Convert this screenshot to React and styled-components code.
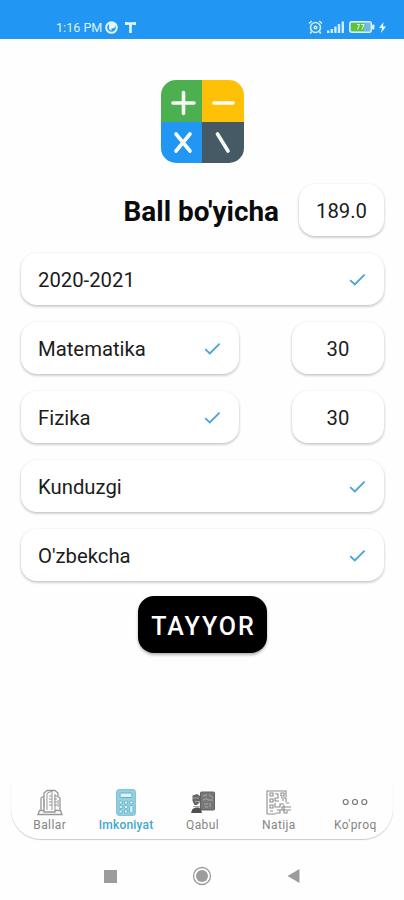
import React from 'react'
import styled, {createGlobalStyle} from 'styled-components'

const GlobalStyle = createGlobalStyle`
    * { box-sizing: border-box; }
    body {
        margin: 0;
        background: #fefefe;
        font-family: Roboto, "Liberation Sans", sans-serif;
        color: #1c1c1c;
    }
`;

const Screen = styled.div`
    display: flex;
    flex-direction: column;
    width: 404px;
    height: 900px;
    overflow: hidden;
`;

const StatusBar = styled.header`
    display: flex;
    flex-shrink: 0;
    align-items: center;
    justify-content: space-between;
    height: 39px;
    padding: 15px 18px 0 56px;
    background: #2196f3;
    color: #d9f2fb;
    font-size: 12.6px;
    font-weight: 400;
`;

const StatusGroup = styled.div`
    display: flex;
    align-items: center;
    gap: ${props => props.$gap}px;
`;

const Main = styled.main`
    display: flex;
    flex-direction: column;
    align-items: center;
    flex: 1;
    padding: 41px 20px 0 21px;
`;

const Form = styled.div`
    display: flex;
    flex-direction: column;
    gap: 17px;
    width: 100%;
    margin-top: 21px;
`;

const Row = styled.div`
    display: flex;
    align-items: center;
    justify-content: ${props => props.$end ? 'flex-end' : 'space-between'};
`;

const Title = styled.h1`
    margin: 0 20px 0 0;
    padding-top: 3px;
    color: #0b0b0b;
    font-size: 27.9px;
    font-weight: 700;
    line-height: 49px;
    white-space: nowrap;
`;

const Card = styled.div`
    display: flex;
    align-items: center;
    justify-content: space-between;
    width: ${props => props.$width || '100%'};
    height: 52px;
    padding: 2px 18px 0 17px;
    border-radius: 16px;
    background: white;
    box-shadow: 0 1px 3px rgba(0, 0, 0, 0.2), 0 2px 3px rgba(0, 0, 0, 0.08);
    font-size: 20.3px;
    white-space: nowrap;
`;

const ScoreCard = styled(Card)`
    justify-content: center;
    padding: 2px 0 0;
`;

const Submit = styled.button`
    width: 129px;
    height: 57px;
    margin-top: 15px;
    padding: 3px 0 0 2px;
    border: none;
    border-radius: 16px;
    background: black;
    box-shadow: 0 2px 3px rgba(0, 0, 0, 0.3);
    color: white;
    font-family: inherit;
    font-size: 25px;
    font-weight: 500;
    letter-spacing: 2px;
`;

const TabBar = styled.nav`
    display: flex;
    flex-shrink: 0;
    height: 56px;
    margin: 0 11px 0 11px;
    border-radius: 0 0 30px 30px;
    background: #fefefe;
    box-shadow: 0 1px 1px rgba(0, 0, 0, 0.2);
`;

const Tab = styled.div`
    display: flex;
    flex: 1;
    flex-direction: column;
    align-items: center;
    gap: 2px;
    padding: 6px 0 0 1px;
    color: ${props => props.$active ? '#45a6cb' : '#858585'};
    font-size: 12px;
    font-weight: ${props => props.$active ? 500 : 400};
    letter-spacing: ${props => props.$active ? 0.2 : 0.4}px;
    line-height: 14px;
    white-space: nowrap;
`;

const SystemNav = styled.footer`
    display: flex;
    flex-shrink: 0;
    align-items: center;
    justify-content: space-between;
    height: 61px;
    padding: 13px 104px 0 104px;
`;

const Check = () => (
    <svg width="17" height="14" viewBox="0 0 17 14" fill="none" stroke="#4ba6cf" strokeWidth="1.8">
        <path d="M1.2 7.2L5.8 11.5L15.6 1.6" />
    </svg>
)

const Logo = () => (
    <svg width="83" height="83" viewBox="0 0 83 83">
        <clipPath id="logo"><rect width="83" height="83" rx="15" /></clipPath>
        <g clipPath="url(#logo)">
            <rect width="42" height="42" fill="#4caf50" />
            <rect x="41" width="42" height="42" fill="#ffc107" />
            <rect y="42" width="42" height="41" fill="#2196f3" />
            <rect x="41" y="42" width="42" height="41" fill="#455a64" />
        </g>
        <g stroke="#f8fbf4" strokeWidth="3.6" strokeLinecap="round">
            <path d="M12 23H33M22.5 12.5V33.5M53 23H72" />
            <path d="M15 54L29 71M29 54L15 71M56.500 54L67 71" />
        </g>
    </svg>
)

const ClockBadge = () => (
    <svg width="13" height="13" viewBox="0 0 13 13">
        <circle cx="6.500" cy="6.500" r="5.300" fill="none" stroke="#e2f6fd" strokeWidth="2" />
        <path d="M4 2H7.500A2.500 2.500 0 0 1 7.500 7.500H6.500V10L4 8Z" fill="#e2f6fd" />
    </svg>
)

const Telegraph = () => (
    <svg width="11" height="11" viewBox="0 0 11 11">
        <path d="M1 0V3M10 0V3M1 1.500H10M5.500 1V11" stroke="#e2f6fd" strokeWidth="2.700" fill="none" />
    </svg>
)

const Alarm = () => (
    <svg width="15" height="14" viewBox="0 0 15 14" fill="none" stroke="#cdeef8" strokeWidth="1.600">
        <circle cx="7.500" cy="7.500" r="5" />
        <circle cx="7.500" cy="7.500" r="1.300" />
        <path d="M1 3.500L3.800 1M14 3.500L11.200 1M3.500 11.500L2.300 13.500M11.500 11.500L12.700 13.500" />
    </svg>
)

const Signal = () => (
    <svg width="18" height="12" viewBox="0 0 18 12" stroke="#cdeef8" strokeWidth="2.400">
        <path d="M1.200 9.500V12M4.800 8V12M8.400 5.500V12M12 3V12" />
        <path d="M15.800 0.500V12" />
    </svg>
)

const Battery = () => (
    <svg width="26" height="12" viewBox="0 0 26 12">
        <rect x="0.800" y="0.800" width="21.500" height="10.400" rx="2" fill="#6fb8ea" stroke="#d5f2ec" strokeWidth="1.500" />
        <rect x="2" y="2" width="13" height="8" fill="#5dc436" />
        <path d="M8 3.500H10.500L8.500 8.500M12 3.500H15L13 8.500" stroke="#e3fadc" fill="none" />
        <rect x="23" y="3.500" width="2.500" height="5" rx="1" fill="#d5f2ec" />
    </svg>
)

const Bolt = () => (
    <svg width="7" height="11" viewBox="0 0 7 11">
        <path d="M4.500 0L0 6H3L2 11L7 4.500H4Z" fill="#e8faff" />
    </svg>
)

const Buildings = () => (
    <svg width="26" height="27" viewBox="0 0 26 27" fill="none" stroke="#989898">
        <path d="M7 21V4L10 1.500H18L21 4V7M4 21V9L7 7M20 7L23 9V21" strokeWidth="1.300" />
        <path d="M10 21V4.500L15 2V21M18 5V21" />
        <path d="M12 7H15M12 10H15M12 13H15M12 16H15M17 7H20M17 10H20M17 13H20M17 16H20M7 10V18M21 11V18" />
        <path d="M2.500 21.500H7V23H18V21.500H23.500L25 25.500H1Z" strokeWidth="1.400" />
    </svg>
)

const Calculator = () => (
    <svg width="20" height="27" viewBox="0 0 20 27">
        <rect x="0.700" y="0.700" width="18.600" height="25.600" rx="2" fill="#9ad1e0" stroke="#6dbcd4" />
        <rect x="4" y="4" width="12" height="4.500" rx="0.500" fill="#e2f3f6" stroke="#5db1cb" />
        <g fill="#dceff4" stroke="#5db1cb" strokeWidth="0.900">
            <rect x="3" y="12" width="3.400" height="3" rx="1" />
            <rect x="8.300" y="12" width="3.400" height="3" rx="1" />
            <rect x="13.600" y="12" width="3.400" height="3" rx="1" />
            <rect x="3" y="16.500" width="3.400" height="3" rx="1" />
            <rect x="8.300" y="16.500" width="3.400" height="3" rx="1" />
            <rect x="3" y="21" width="3.400" height="3" rx="1" />
            <rect x="8.300" y="21" width="3.400" height="3" rx="1" />
            <rect x="13.600" y="16.500" width="3.400" height="7.500" rx="1" />
        </g>
    </svg>
)

const Teacher = () => (
    <svg width="26" height="27" viewBox="0 0 26 27">
        <rect x="10.500" y="3" width="14" height="18" rx="1" fill="#787878" stroke="#626262" />
        <path d="M13 7L17 6M19 5.500L23 9M13 11.500L16 9.500L18 11H23M14 15H18M20 14V18M15 18H18" fill="none" stroke="#a8a8a8" />
        <path d="M2.500 6.500L7 5L10 7V13L7 16H4.500L2.500 12Z" fill="#666" />
        <path d="M3 9H9M5 12.500H10" stroke="#a5a5a5" />
        <path d="M1 24L2.500 20L5.500 18.500H9L11 20.500L12 24Z" fill="#4f4f4f" />
        <path d="M3 17.500H10" stroke="#aaa" />
    </svg>
)

const Results = () => (
    <svg width="26" height="27" viewBox="0 0 26 27" fill="none" stroke="#8b8b8b" strokeWidth="1.100">
        <path d="M1 25V2H20V8M1 25H10M4 4H7V7H4ZM4 10H7V13H4ZM4 16H7V19H4ZM4 22H7" />
        <path d="M9 5H12V9H9V12H13M15 4H18V7H15ZM15 9H20V13M9 14V18H14V15H18M11 21H16V18H25M16 21H25M18 16V24H21V22" />
        <path d="M10 24H14V21M16 11H18M20 14H23" />
    </svg>
)

const More = () => (
    <svg width="26" height="27" viewBox="0 0 26 27" fill="none" stroke="#777" strokeWidth="1.200">
        <circle cx="3.700" cy="13" r="2.500" />
        <circle cx="13" cy="13" r="2.500" />
        <circle cx="22.300" cy="13" r="2.500" />
    </svg>
)

const tabs = [
    {label: 'Ballar', Icon: Buildings},
    {label: 'Imkoniyat', Icon: Calculator, active: true},
    {label: 'Qabul', Icon: Teacher},
    {label: 'Natija', Icon: Results},
    {label: "Ko'proq", Icon: More},
]

const SelectCard = ({label, width}) => (
    <Card $width={width}>
        <span>{label}</span>
        <Check />
    </Card>
)

const App = () => {
    return (
        <Screen>
            <GlobalStyle />
            <StatusBar>
                <StatusGroup $gap={7}>
                    <StatusGroup $gap={3}>
                        <span>1:16 PM</span>
                        <ClockBadge />
                    </StatusGroup>
                    <Telegraph />
                </StatusGroup>
                <StatusGroup $gap={4}>
                    <Alarm />
                    <Signal />
                    <Battery />
                    <Bolt />
                </StatusGroup>
            </StatusBar>
            <Main>
                <Logo />
                <Form>
                    <Row $end>
                        <Title>Ball bo'yicha</Title>
                        <ScoreCard $width="85px">189.0</ScoreCard>
                    </Row>
                    <SelectCard label="2020-2021" />
                    <Row>
                        <SelectCard label="Matematika" width="218px" />
                        <ScoreCard $width="92px">30</ScoreCard>
                    </Row>
                    <Row>
                        <SelectCard label="Fizika" width="218px" />
                        <ScoreCard $width="92px">30</ScoreCard>
                    </Row>
                    <SelectCard label="Kunduzgi" />
                    <SelectCard label="O'zbekcha" />
                </Form>
                <Submit>TAYYOR</Submit>
            </Main>
            <TabBar>
                {tabs.map(({label, Icon, active}) => (
                    <Tab key={label} $active={active}>
                        <Icon />
                        <span>{label}</span>
                    </Tab>
                ))}
            </TabBar>
            <SystemNav>
                <svg width="13" height="13"><rect width="13" height="13" fill="#9c9c9c" /></svg>
                <svg width="20" height="20">
                    <circle cx="10" cy="10" r="8.500" fill="none" stroke="#9c9c9c" strokeWidth="1.300" />
                    <circle cx="10" cy="10" r="6" fill="#9c9c9c" />
                </svg>
                <svg width="13" height="14"><path d="M0.500 7L12.500 0V14Z" fill="#9c9c9c" /></svg>
            </SystemNav>
        </Screen>
    )
}

export default App
